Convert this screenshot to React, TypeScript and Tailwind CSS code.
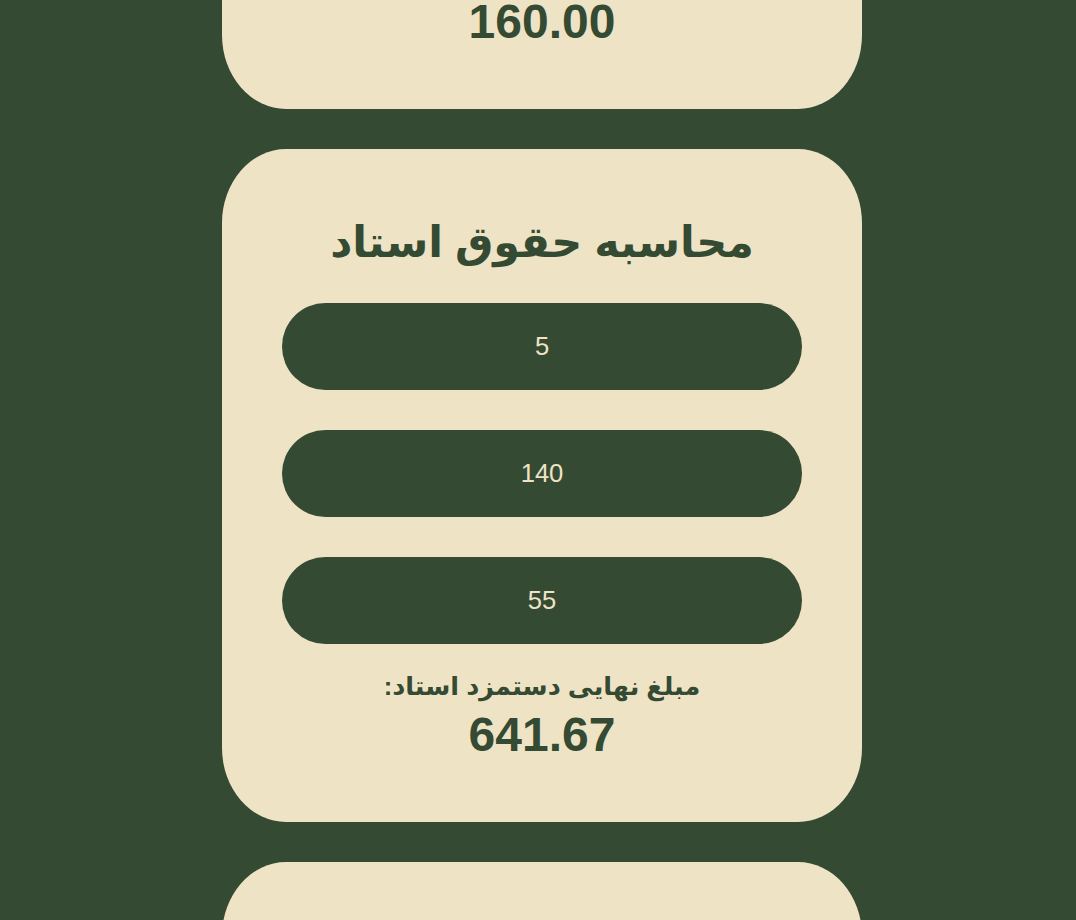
import React from "react";

const font = { fontFamily: '"Liberation Sans", Arial, "DejaVu Sans", sans-serif' };

function Card({ title, values, label, result }: { title: string; values: string[]; label: string; result: string }) {
  return (
    <div
      dir="rtl"
      className="w-[640px] bg-[#efe3c5] rounded-[64px/74px] px-[60px] pt-[60px] pb-[60px] flex flex-col items-center text-[#344a33]"
    >
      <h1 className="text-[43px] font-bold leading-[55px] pt-[6px] mb-[33px]">{title}</h1>
      <div className="flex flex-col gap-[40px] w-full">
        {values.map((v, i) => (
          <div
            key={i}
            className="w-full h-[87px] rounded-full bg-[#344a33] text-[#efe3c5] text-[25.6px] flex items-center justify-center"
          >
            {v}
          </div>
        ))}
      </div>
      <div className="mt-[22px] text-[25.5px] font-bold leading-[41px]">{label}</div>
      <div className="text-[48px] font-bold leading-[55px]">{result}</div>
    </div>
  );
}

export default function App() {
  return (
    <div className="min-h-screen bg-[#344a33] overflow-hidden h-[920px] pl-[8px]" style={font}>
      <div className="flex flex-col items-center gap-[40px] -mt-[564px]">
        <Card title="محاسبه حقوق دانشجو" values={["4", "120", "40"]} label="مبلغ نهایی دستمزد دانشجو:" result="160.00" />
        <Card title="محاسبه حقوق استاد" values={["5", "140", "55"]} label="مبلغ نهایی دستمزد استاد:" result="641.67" />
        <Card title="محاسبه حقوق کارمند" values={["3", "100", "30"]} label="مبلغ نهایی دستمزد کارمند:" result="0.00" />
      </div>
    </div>
  );
}
